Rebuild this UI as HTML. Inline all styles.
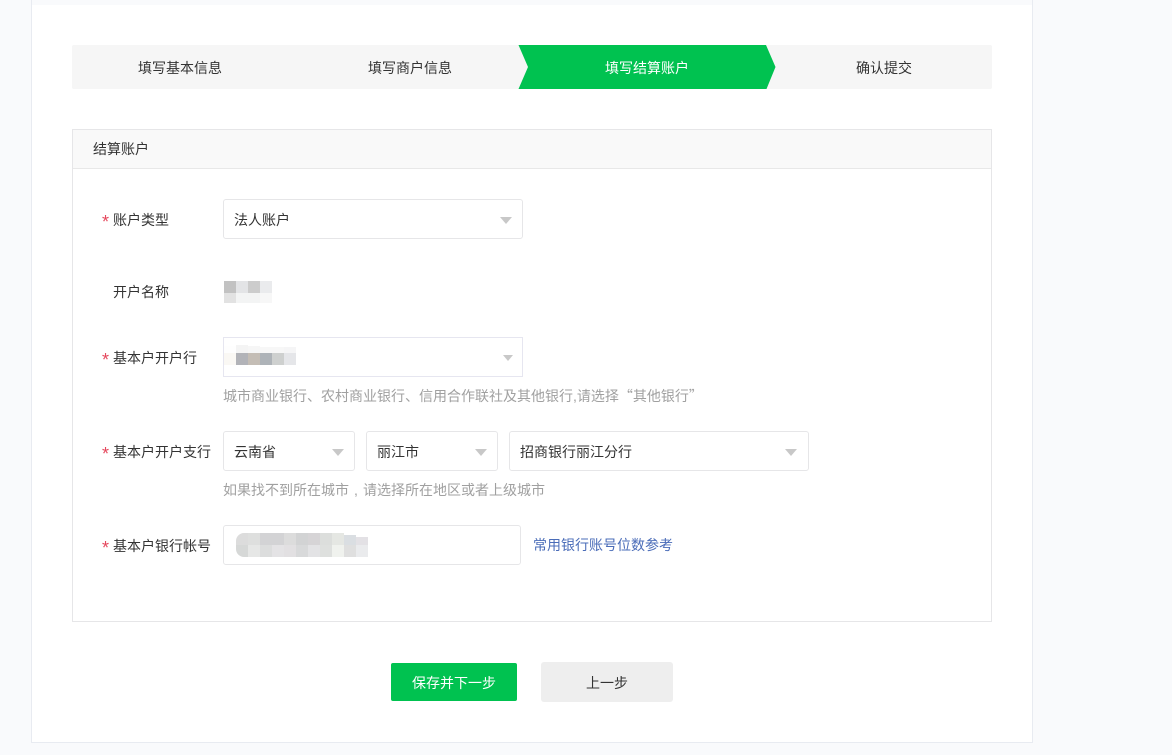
<!DOCTYPE html>
<html lang="zh"><head><meta charset="utf-8"><style>
html,body{margin:0;padding:0}
body{position:relative;width:1172px;height:755px;overflow:hidden;background:#f9fafc;font-family:"Liberation Sans","Noto Sans CJK SC",sans-serif;font-size:14px;color:#333}
div,span,a{position:absolute;box-sizing:border-box;white-space:nowrap}
i{font-style:normal;display:inline-block;width:14px;font-family:"Noto Sans CJK SC",sans-serif}
.t{line-height:20px}
.c{text-align:center}
.box{background:#fff;border:1px solid #e6e6e8;border-radius:3px;height:40px}
.arr{width:0;height:0;border-left:6px solid transparent;border-right:6px solid transparent;border-top:7px solid #c8c8c8}
.star{color:#e5475c;font-size:18px;left:102px;line-height:20px}
.hint{color:#a0a0a0;line-height:20px}
.b{width:12px}
</style></head><body>
<div style="left:31px;top:0;width:1002px;height:743px;background:#fff;border:1px solid #e8ebf1;border-top:0"></div>
<div style="left:32px;top:0;width:1000px;height:5px;background:#f9fafc"></div>

<div style="left:72px;top:45px;width:920px;height:44px;background:#f6f6f6;border-radius:2px"></div>
<svg style="position:absolute;left:515px;top:45px" width="265" height="44"><path d="M3.500 0H251L260.500 22 251.500 44H3.500L13 22Z" fill="#00c250"/></svg>
<div class="t c" style="left:80px;top:58px;width:200px">填写基本信息</div>
<div class="t c" style="left:310px;top:58px;width:200px">填写商户信息</div>
<div class="t c" style="left:547px;top:58px;width:200px;color:#fff">填写结算账户</div>
<div class="t c" style="left:784px;top:58px;width:200px">确认提交</div>

<div style="left:72px;top:129px;width:920px;height:493px;border:1px solid #e6e6e8;background:#fff"></div>
<div style="left:73px;top:130px;width:918px;height:39px;background:#f9f9f9;border-bottom:1px solid #e8e8e8"></div>
<div class="t" style="left:93px;top:139px">结算账户</div>

<span class="star" style="top:212px">*</span>
<div class="t" style="left:113px;top:210px">账户类型</div>
<div class="box" style="left:223px;top:199px;width:300px"></div>
<div class="t" style="left:234px;top:210px">法人账户</div>
<div class="arr" style="left:500px;top:217px"></div>

<div class="t" style="left:113px;top:282px">开户名称</div>
<div class="b" style="left:224px;top:281px;height:12px;background:#c2c2c2"></div>
<div class="b" style="left:236px;top:281px;height:12px;background:#e3e4e6"></div>
<div class="b" style="left:248px;top:281px;height:12px;background:#cccccc"></div>
<div class="b" style="left:260px;top:281px;height:12px;background:#eaebed"></div>
<div class="b" style="left:224px;top:293px;height:10px;background:#e2e2e2"></div>
<div class="b" style="left:236px;top:293px;height:10px;background:#f3f4f4"></div>
<div class="b" style="left:248px;top:293px;height:10px;background:#f3f4f4"></div>
<div class="b" style="left:260px;top:293px;height:10px;background:#f7f7f7"></div>

<span class="star" style="top:350px">*</span>
<div class="t" style="left:113px;top:348px">基本户开户行</div>
<div class="box" style="left:223px;top:337px;width:300px;border-color:#e6e6f0;border-radius:0"></div>
<div class="b" style="left:224px;top:346px;height:7px;background:#fefefe"></div>
<div class="b" style="left:236px;top:345px;height:8px;background:#f4f4f4"></div>
<div class="b" style="left:248px;top:346px;height:7px;background:#f6f6f6"></div>
<div class="b" style="left:260px;top:347px;height:6px;background:#f7f7f7"></div>
<div class="b" style="left:272px;top:347px;height:6px;background:#f7f7f7"></div>
<div class="b" style="left:284px;top:347px;height:6px;background:#f5f5f6"></div>
<div class="b" style="left:224px;top:353px;height:12px;background:#faf8f4"></div>
<div class="b" style="left:236px;top:353px;height:12px;background:#b2b3b8"></div>
<div class="b" style="left:248px;top:353px;height:12px;background:#c4bdb5"></div>
<div class="b" style="left:260px;top:353px;height:12px;background:#aeb3b8"></div>
<div class="b" style="left:272px;top:353px;height:12px;background:#ced0cf"></div>
<div class="b" style="left:284px;top:353px;height:12px;background:#e5e6e9"></div>
<div class="arr" style="left:503px;top:355px;border-left-width:5.500px;border-right-width:5.500px;border-top-width:6px"></div>
<div class="hint" style="left:223px;top:386px">城市商业银行、农村商业银行、信用合作联社及其他银行,请选择<i style="text-align:right">“</i>其他银行<i style="text-align:left">”</i></div>

<span class="star" style="top:444px">*</span>
<div class="t" style="left:113px;top:442px">基本户开户支行</div>
<div class="box" style="left:223px;top:431px;width:132px"></div>
<div class="t" style="left:234px;top:442px">云南省</div>
<div class="arr" style="left:332px;top:449px"></div>
<div class="box" style="left:366px;top:431px;width:132px"></div>
<div class="t" style="left:377px;top:442px">丽江市</div>
<div class="arr" style="left:475px;top:449px"></div>
<div class="box" style="left:509px;top:431px;width:300px"></div>
<div class="t" style="left:520px;top:442px">招商银行丽江分行</div>
<div class="arr" style="left:785px;top:449px"></div>
<div class="hint" style="left:223px;top:480px">如果找不到所在城市<i style="text-align:center;font-family:'Liberation Sans',sans-serif">,</i>请选择所在地区或者上级城市</div>

<span class="star" style="top:538px">*</span>
<div class="t" style="left:113px;top:536px">基本户银行帐号</div>
<div class="box" style="left:223px;top:525px;width:298px"></div>
<div class="b" style="left:236px;top:533px;height:12px;background:#dcdcdc;border-top-left-radius:8px"></div>
<div class="b" style="left:248px;top:533px;height:12px;background:#dedfde"></div>
<div class="b" style="left:260px;top:533px;height:12px;background:#d3d3d5"></div>
<div class="b" style="left:272px;top:533px;height:12px;background:#d3d3d5"></div>
<div class="b" style="left:284px;top:533px;height:12px;background:#dcdcdc"></div>
<div class="b" style="left:296px;top:533px;height:12px;background:#d2d3d4"></div>
<div class="b" style="left:308px;top:533px;height:12px;background:#d6d4d6"></div>
<div class="b" style="left:320px;top:533px;height:12px;background:#dcdedc"></div>
<div class="b" style="left:332px;top:533px;height:12px;background:#e5e7e3"></div>
<div class="b" style="left:344px;top:535px;height:10px;background:#dadee2"></div>
<div class="b" style="left:356px;top:537px;height:8px;background:#e3e1e5"></div>
<div class="b" style="left:236px;top:545px;height:12px;background:#d6d8d7;border-bottom-left-radius:8px"></div>
<div class="b" style="left:248px;top:545px;height:12px;background:#e6e7e6"></div>
<div class="b" style="left:260px;top:545px;height:12px;background:#dcdddd"></div>
<div class="b" style="left:272px;top:545px;height:12px;background:#e4e3e5"></div>
<div class="b" style="left:284px;top:545px;height:12px;background:#e2e0e2"></div>
<div class="b" style="left:296px;top:545px;height:12px;background:#d8d9da"></div>
<div class="b" style="left:308px;top:545px;height:12px;background:#e3e3e5"></div>
<div class="b" style="left:320px;top:545px;height:12px;background:#dee0de"></div>
<div class="b" style="left:332px;top:545px;height:12px;background:#f0f2ee"></div>
<div class="b" style="left:344px;top:545px;height:12px;background:#dfdfdf"></div>
<div class="b" style="left:356px;top:545px;height:12px;background:#eaebed"></div>
<div class="t" style="left:533px;top:535px;color:#4a6cb8">常用银行账号位数参考</div>

<div class="c" style="left:391px;top:663px;width:126px;height:38px;line-height:40px;background:#00c250;color:#fff;border-radius:2px">保存并下一步</div>
<div class="c" style="left:541px;top:662px;width:132px;height:40px;line-height:42px;background:#eee;border-radius:3px">上一步</div>
</body></html>
